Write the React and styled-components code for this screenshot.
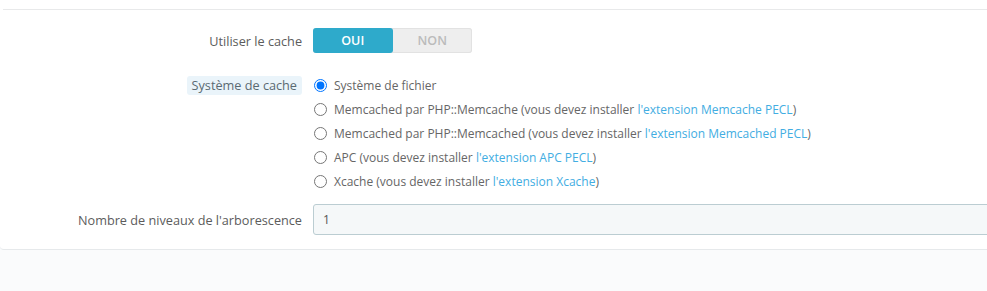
import styled, { createGlobalStyle } from 'styled-components';

const GlobalStyle = createGlobalStyle`
  html, body {
    margin: 0;
    padding: 0;
    background: #fafbfc;
    font-family: "Open Sans", "Liberation Sans", sans-serif;
  }
`;

const options = [
  { label: 'Système de fichier', checked: true },
  { label: 'Memcached par PHP::Memcache', link: "l'extension Memcache PECL" },
  { label: 'Memcached par PHP::Memcached', link: "l'extension Memcached PECL" },
  { label: 'APC', link: "l'extension APC PECL" },
  { label: 'Xcache', link: "l'extension Xcache" },
];

export default function App() {
  return (
    <>
      <GlobalStyle />
      <Panel>
        <Separator />
        <Form>
          <Row>
            <Label>Utiliser le cache</Label>
            <Switch>
              <SwitchHalf active>OUI</SwitchHalf>
              <SwitchHalf>NON</SwitchHalf>
            </Switch>
          </Row>

          <Row top>
            <Label>
              <Hint>Système de cache</Hint>
            </Label>
            <RadioList>
              {options.map((opt) => (
                <RadioRow key={opt.label}>
                  <Radio type="radio" name="cache" defaultChecked={opt.checked} />
                  <span>
                    {opt.label}
                    {opt.link && (
                      <>
                        {' (vous devez installer '}
                        <Link href="#">{opt.link}</Link>)
                      </>
                    )}
                  </span>
                </RadioRow>
              ))}
            </RadioList>
          </Row>

          <Row last>
            <Label>Nombre de niveaux de l'arborescence</Label>
            <TextInput defaultValue="1" />
          </Row>
        </Form>
      </Panel>
    </>
  );
}

//------------Styled Comp------------
const Panel = styled.div`
  background: #fff;
  padding-top: 9px;
  padding-bottom: 14px;
  border-bottom: 1px solid #e6e9eb;
  border-bottom-left-radius: 4px;
`;

const Separator = styled.div`
  height: 1px;
  margin-left: 3px;
  background: #e8e9ea;
`;

const Form = styled.div`
  display: flex;
  flex-direction: column;
  padding-top: 18px;
`;

const Row = styled.div`
  display: grid;
  grid-template-columns: 302px 1fr;
  column-gap: 11px;
  align-items: ${(p) => (p.top ? 'start' : 'center')};
  margin-bottom: ${(p) => (p.last ? '0' : p.top ? '11px' : '20px')};
`;

const Label = styled.div`
  text-align: right;
  font-size: 12.7px;
  color: #5c5c5c;
`;

const Hint = styled.span`
  display: inline-block;
  margin-top: 3px;
  padding: 0 5px;
  line-height: 19px;
  background: #eaf4fa;
  border-radius: 3px;
  color: #5a6a72;
`;

const Switch = styled.div`
  display: flex;
  width: 159px;
  height: 25px;
  border-radius: 3px;
  background: #eeeeee;
  box-shadow: inset 0 0 0 1px #e2e2e2;
`;

const SwitchHalf = styled.div`
  flex: 1;
  display: flex;
  align-items: center;
  justify-content: center;
  font-size: 12.5px;
  font-weight: 600;
  border-radius: 3px;
  color: ${(p) => (p.active ? '#fff' : '#bbb')};
  background: ${(p) => (p.active ? '#2eaacb' : 'transparent')};
`;

const RadioList = styled.div`
  display: flex;
  flex-direction: column;
`;

const RadioRow = styled.label`
  display: flex;
  align-items: center;
  height: 24px;
  font-size: 12px;
  color: #666;
`;

const Radio = styled.input`
  width: 13px;
  height: 13px;
  margin: 0 7px 0 1px;
`;

const Link = styled.a`
  color: #42ade2;
  text-decoration: none;
`;

const TextInput = styled.input`
  box-sizing: border-box;
  height: 31px;
  width: calc(100% + 20px);
  padding: 0 9px;
  font-family: inherit;
  font-size: 12px;
  color: #555;
  background: #f5f8f9;
  border: 1px solid #bbcdd2;
  border-radius: 3px;
  outline: none;
`;
